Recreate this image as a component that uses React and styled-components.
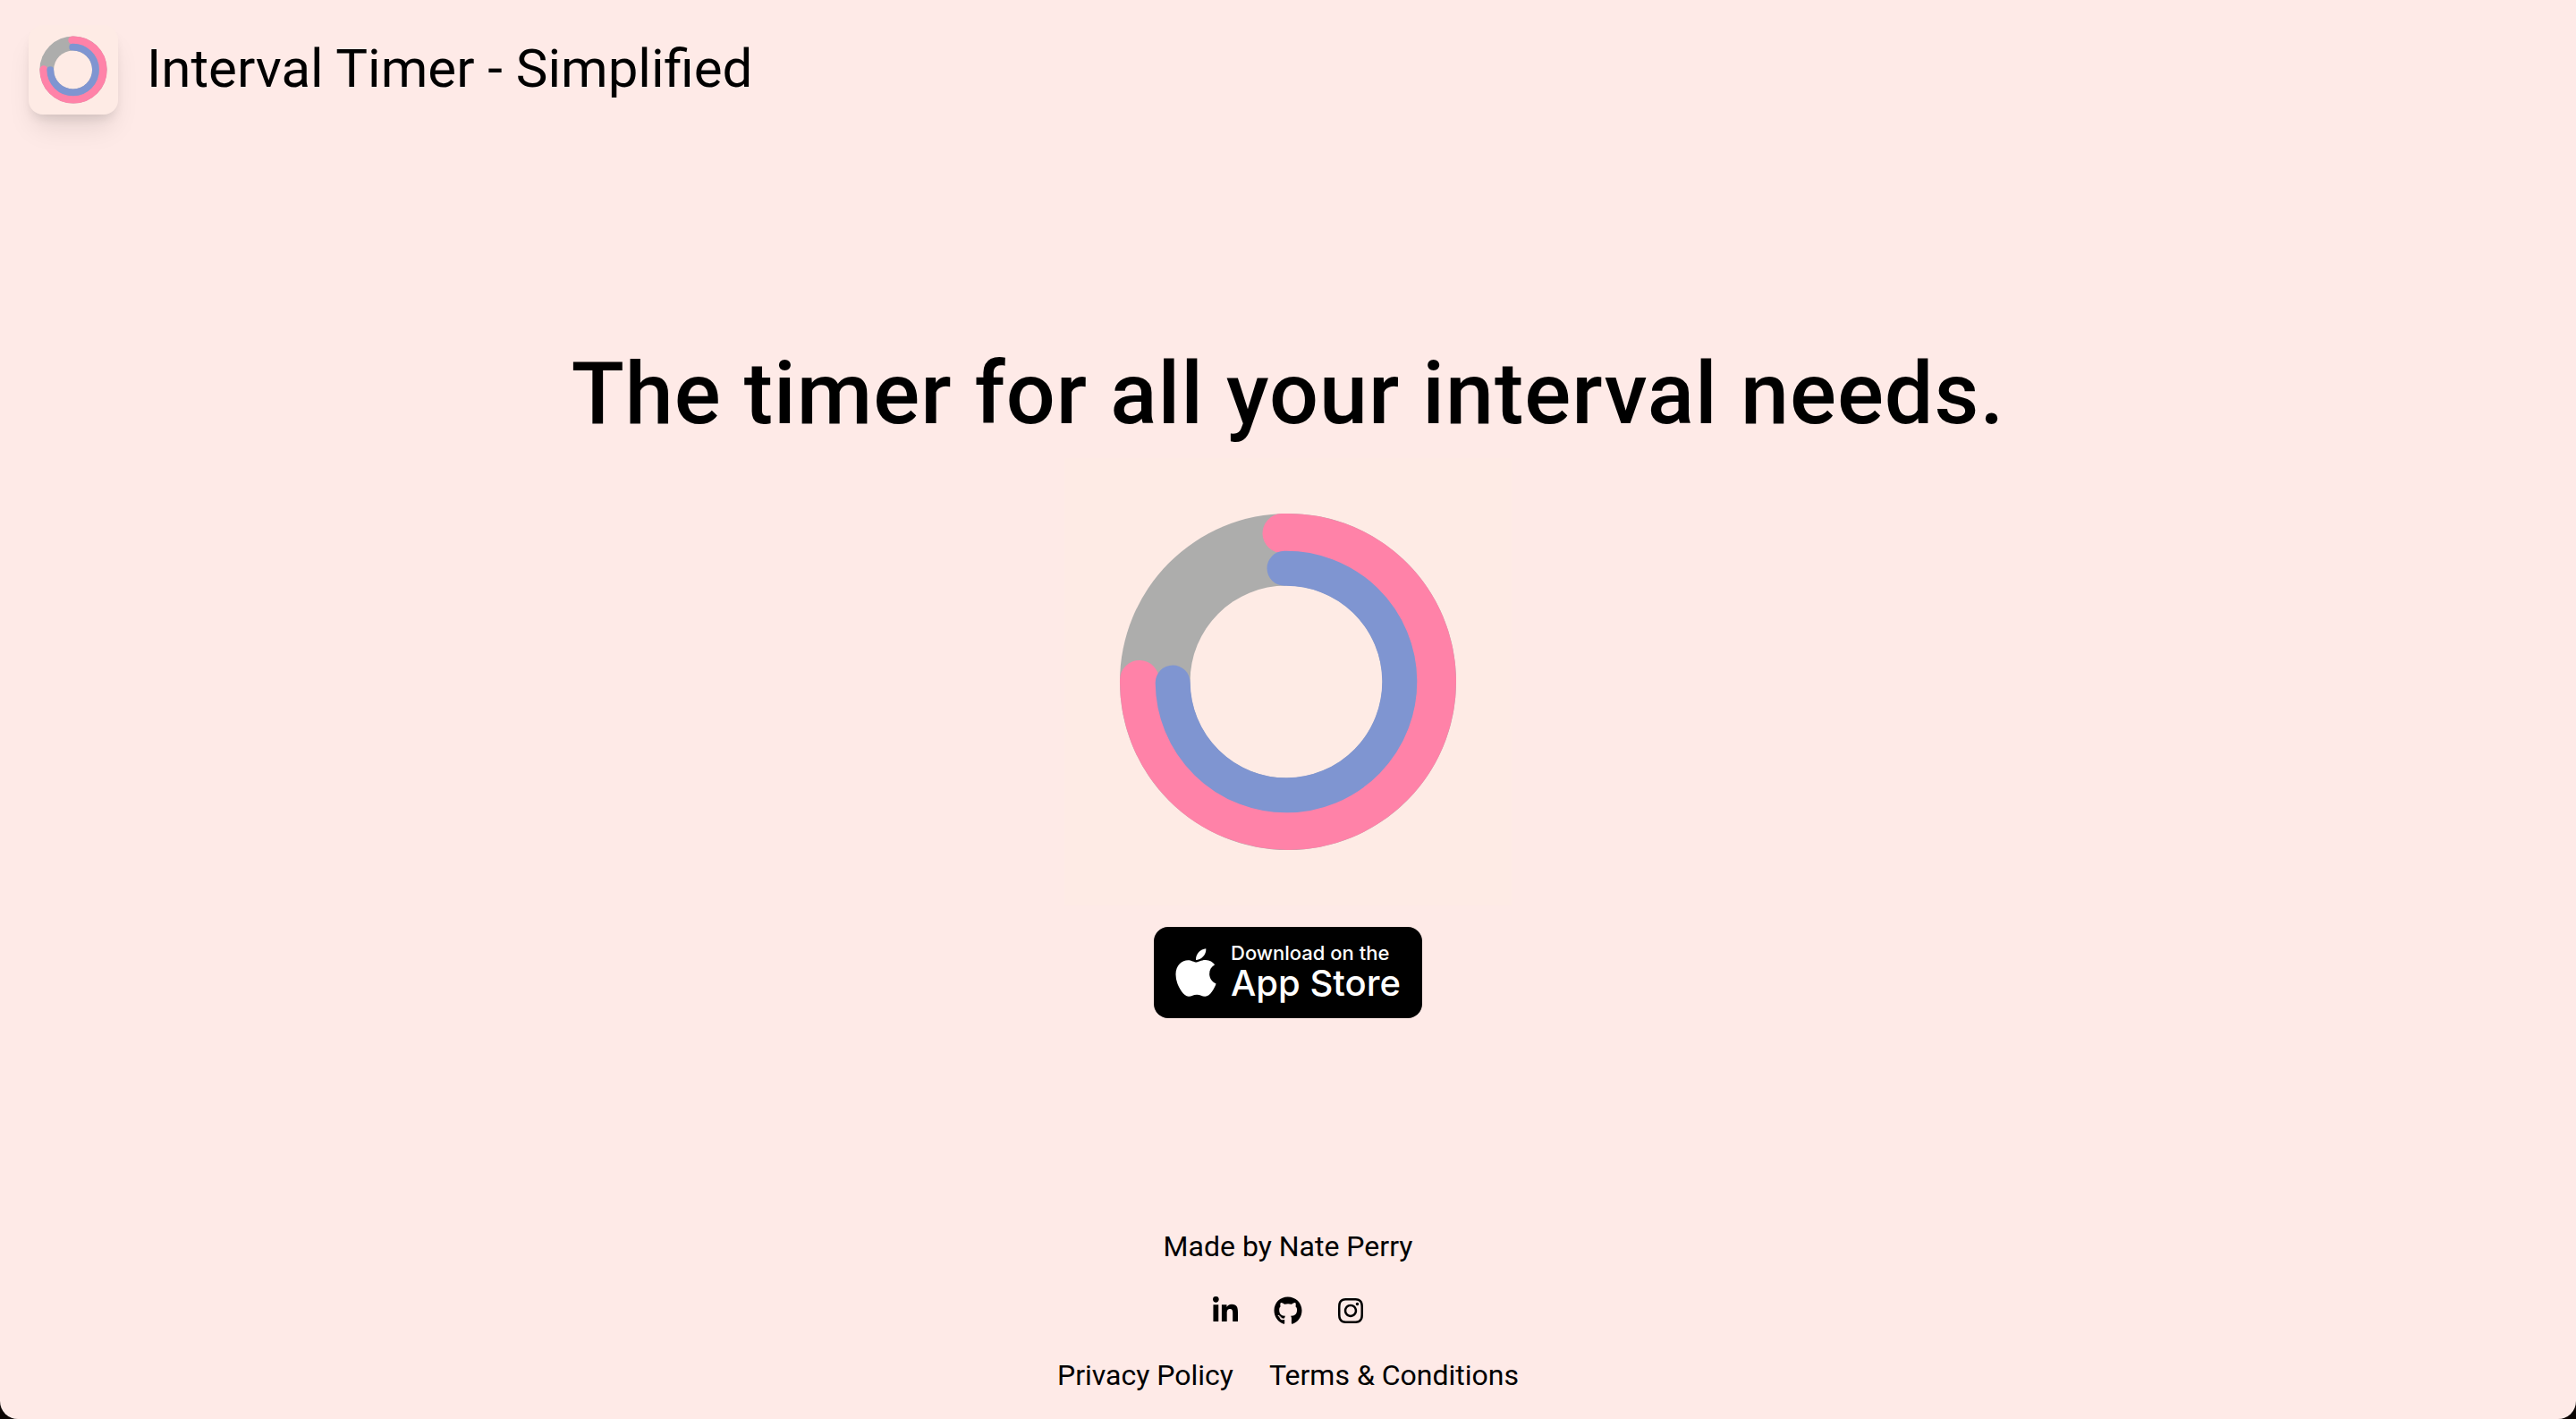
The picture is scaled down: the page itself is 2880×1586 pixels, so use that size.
import React from "react";
import styled, { createGlobalStyle } from "styled-components";
import { FaLinkedinIn, FaGithub, FaInstagram, FaApple } from "react-icons/fa";

const GlobalStyle = createGlobalStyle`
  *, *::before, *::after { box-sizing: border-box; }
  body { margin: 0; background: #0c0504; }
  h1, h2, p { margin: 0; padding: 0; }
`;

const Page = styled.div`
  min-height: 100vh;
  display: flex;
  flex-direction: column;
  background: #feeae7;
  border-radius: 0 0 20px 20px;
  color: #000;
  font-family: Roboto, "Liberation Sans", sans-serif;
`;

const Header = styled.header`
  display: flex;
  align-items: center;
  gap: 32px;
  padding: 28px 32px;
`;

const LogoTile = styled.div`
  display: flex;
  width: 100px;
  height: 100px;
  border-radius: 16px;
  background: #feebe5;
  box-shadow: 0 20px 30px -6px rgba(0, 0, 0, 0.1), 0 8px 12px -4px rgba(0, 0, 0, 0.1);
`;

const SiteName = styled.h1`
  padding-bottom: 2px;
  font-size: 60px;
  line-height: 72px;
  font-weight: 400;
`;

const Main = styled.main`
  flex: 1;
  display: flex;
  flex-direction: column;
  align-items: center;
  justify-content: center;
  gap: 24px;
  padding-top: 4px;
`;

const Tagline = styled.h2`
  font-size: 97px;
  line-height: 96px;
  font-weight: 500;
  letter-spacing: 1px;
  text-align: center;
`;

const HeroArt = styled.div`
  display: flex;
  width: 500px;
  height: 500px;
  background: #feebe5;
`;

const StoreLink = styled.a`
  display: flex;
  align-items: center;
  gap: 16px;
  width: 300px;
  height: 102px;
  padding: 0 24px;
  border-radius: 16px;
  background: #000;
  color: #fff;
  text-decoration: none;
  white-space: nowrap;
  font-family: Inter, Roboto, sans-serif;
  font-weight: 500;
`;

const AppleIcon = styled(FaApple)`
  flex: none;
  width: 46px;
  height: 64px;
`;

const StoreText = styled.span`
  display: flex;
  flex-direction: column;
`;

const StoreSmall = styled.span`
  font-size: 22px;
  line-height: 24px;
`;

const StoreLarge = styled.span`
  font-size: 40px;
  line-height: 44px;
`;

const Footer = styled.footer`
  display: flex;
  flex-direction: column;
  align-items: center;
  gap: 32px;
  padding-bottom: 25px;
  font-size: 32px;
  line-height: 48px;
`;

const LinkRow = styled.nav`
  display: flex;
  align-items: center;
  gap: ${({ $gap }) => $gap}px;
`;

const FooterLink = styled.a`
  display: flex;
  color: inherit;
  text-decoration: none;
`;

function Rings() {
  return (
    <svg viewBox="0 0 500 500" width="100%" height="100%" aria-hidden="true">
      <circle cx="250" cy="250" r="188" fill="#adadac" />
      <path d="M243.500 84.100A166 166 0 1 1 84 248" fill="none" stroke="#ff82a8" strokeWidth="44" strokeLinecap="round" />
      <circle cx="248" cy="250" r="107.500" fill="#feebe5" />
      <path d="M246 123.200A126.800 126.800 0 1 1 121.200 251" fill="none" stroke="#7f95d1" strokeWidth="39" strokeLinecap="round" />
    </svg>
  );
}

export default function App() {
  return (
    <Page>
      <GlobalStyle />
      <Header>
        <LogoTile><Rings /></LogoTile>
        <SiteName>Interval Timer - Simplified</SiteName>
      </Header>
      <Main>
        <Tagline>The timer for all your interval needs.</Tagline>
        <HeroArt><Rings /></HeroArt>
        <StoreLink href="#app-store">
          <AppleIcon />
          <StoreText>
            <StoreSmall>Download on the</StoreSmall>
            <StoreLarge>App Store</StoreLarge>
          </StoreText>
        </StoreLink>
      </Main>
      <Footer>
        <p>Made by Nate Perry</p>
        <LinkRow $gap={38} aria-label="Social">
          <FooterLink href="#linkedin" aria-label="LinkedIn"><FaLinkedinIn size={32} /></FooterLink>
          <FooterLink href="#github" aria-label="GitHub"><FaGithub size={32} /></FooterLink>
          <FooterLink href="#instagram" aria-label="Instagram"><FaInstagram size={32} /></FooterLink>
        </LinkRow>
        <LinkRow $gap={40} aria-label="Legal">
          <FooterLink href="#privacy">Privacy Policy</FooterLink>
          <FooterLink href="#terms">Terms &amp; Conditions</FooterLink>
        </LinkRow>
      </Footer>
    </Page>
  );
}
